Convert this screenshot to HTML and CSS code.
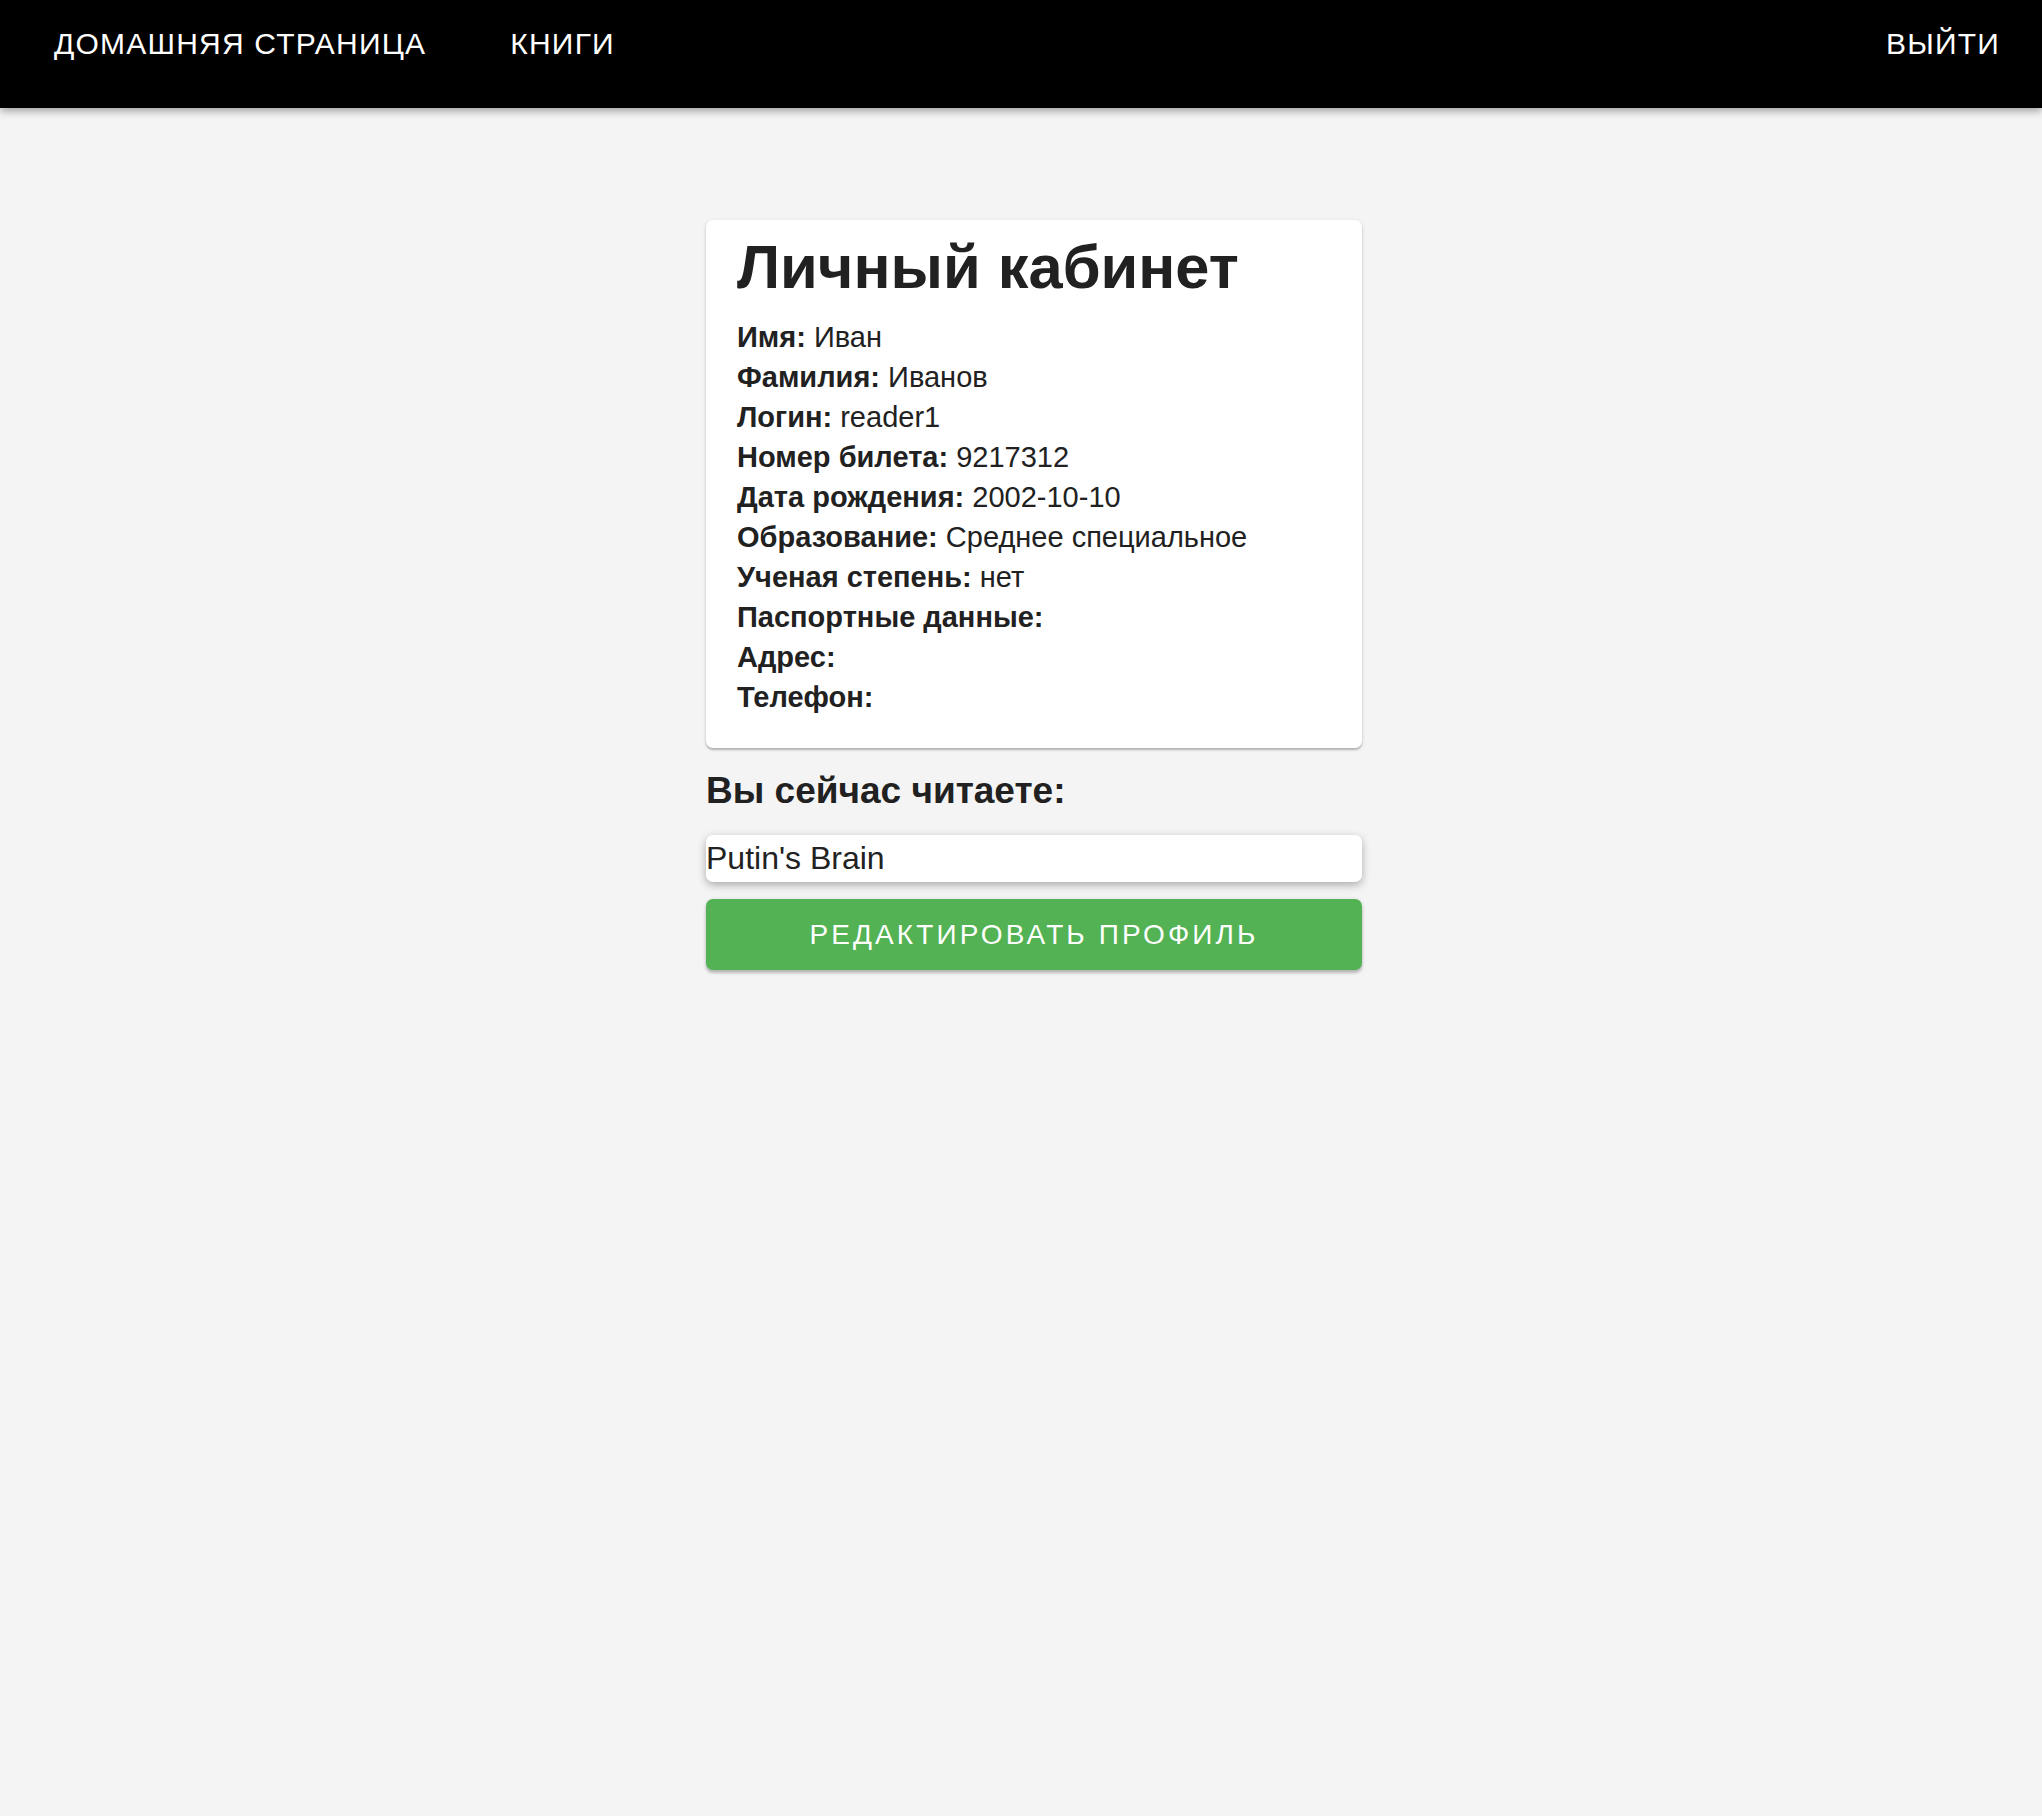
FILE: index.html
```html
<!DOCTYPE html>
<html lang="ru">
<head>
<meta charset="utf-8">
<title>Личный кабинет</title>
<link rel="stylesheet" href="styles.css">
</head>
<body>
<header class="navbar">
  <nav class="nav-left">
    <a class="nav-link" href="#">Домашняя страница</a>
    <a class="nav-link" href="#">Книги</a>
  </nav>
  <a class="nav-link" href="#">Выйти</a>
</header>
<main class="main">
  <section class="column">
    <div class="card">
      <h1 class="title">Личный кабинет</h1>
      <div class="row"><b>Имя:</b> Иван</div>
      <div class="row"><b>Фамилия:</b> Иванов</div>
      <div class="row"><b>Логин:</b> reader1</div>
      <div class="row"><b>Номер билета:</b> 9217312</div>
      <div class="row"><b>Дата рождения:</b> 2002-10-10</div>
      <div class="row"><b>Образование:</b> Среднее специальное</div>
      <div class="row"><b>Ученая степень:</b> нет</div>
      <div class="row"><b>Паспортные данные:</b></div>
      <div class="row"><b>Адрес:</b></div>
      <div class="row"><b>Телефон:</b></div>
    </div>
    <h2 class="subtitle">Вы сейчас читаете:</h2>
    <div class="book">Putin's Brain</div>
    <button class="edit-btn">Редактировать профиль</button>
  </section>
</main>
</body>
</html>
```

FILE: styles.css
```css
html, body {
  margin: 0;
  padding: 0;
}
body {
  background: #f4f4f4;
  font-family: "Liberation Sans", Arial, sans-serif;
  color: #212121;
  min-height: 1816px;
}
.navbar {
  height: 108px;
  background: #000;
  display: flex;
  justify-content: space-between;
  align-items: flex-start;
  padding: 0 42px 0 54px;
  box-sizing: border-box;
  box-shadow: 0 3px 8px rgba(0,0,0,0.35);
}
.nav-left {
  display: flex;
  gap: 84px;
}
.nav-link {
  color: #fff;
  text-decoration: none;
  text-transform: uppercase;
  font-size: 30px;
  letter-spacing: 1.2px;
  line-height: 1;
  padding-top: 29px;
}
.main {
  display: flex;
  justify-content: center;
  padding: 112px 0 0 26px;
}
.column {
  width: 656px;
  display: flex;
  flex-direction: column;
}
.card {
  background: #fff;
  border-radius: 7px;
  padding: 8px 31px 31px;
  box-shadow: 0 2px 2px rgba(0,0,0,0.22), 0 1px 4px rgba(0,0,0,0.1);
}
.title {
  margin: 0 0 12px;
  font-size: 61.4px;
  line-height: 77px;
  font-weight: 700;
  color: #212121;
}
.row {
  font-size: 29px;
  line-height: 40px;
}
.row b {
  font-weight: 700;
}
.subtitle {
  margin: 21px 0 22px;
  font-size: 37px;
  line-height: 1.2;
  font-weight: 700;
}
.book {
  background: #fff;
  height: 47px;
  border-radius: 7px;
  font-size: 32px;
  line-height: 47px;
  color: #222;
  box-shadow: 0 3px 8px rgba(0,0,0,0.3);
}
.edit-btn {
  margin-top: 17px;
  height: 71px;
  border: none;
  border-radius: 7px;
  background: #53b253;
  color: #fff;
  font-family: "Liberation Sans", Arial, sans-serif;
  font-size: 28px;
  letter-spacing: 3.1px;
  text-transform: uppercase;
  box-shadow: 0 3px 3px rgba(0,0,0,0.2), 0 1px 5px rgba(0,0,0,0.12);
  cursor: pointer;
}
```
